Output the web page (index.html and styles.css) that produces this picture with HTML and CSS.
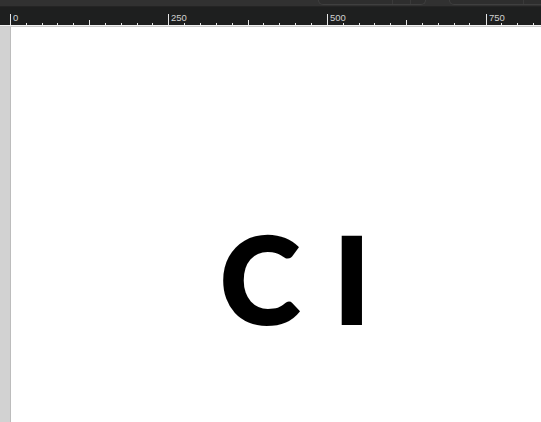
FILE: index.html
```html
<!DOCTYPE html>
<html>
<head>
<meta charset="utf-8">
<link rel="stylesheet" href="styles.css">
</head>
<body>
<div class="app">
  <div class="topbar">
    <div class="tab tab-a"><span class="seg seg-a1"></span><span class="seg seg-a2"></span><span class="seg seg-a3"></span></div>
    <div class="tab tab-b"><span class="seg seg-b1"></span><span class="seg seg-b2"></span></div>
  </div>
  <div class="hruler">
    <svg class="ruler-svg" width="541" height="18" viewBox="0 0 541 18">
      <path class="ticks" d="M10.5 7V18M26.5 16V18M42.5 16V18M57.5 16V18M73.5 16V18M89.5 13V18M105.5 16V18M121.5 16V18M137.5 16V18M152.5 16V18M168.5 7V18M184.5 16V18M200.5 16V18M216.5 16V18M232.5 16V18M248.5 13V18M263.5 16V18M279.5 16V18M295.5 16V18M311.5 16V18M327.5 7V18M343.5 16V18M359.5 16V18M374.5 16V18M390.5 16V18M406.5 13V18M422.5 16V18M438.5 16V18M454.5 16V18M469.5 16V18M486.5 7V18M501.5 16V18M517.5 16V18M533.5 16V18"/>
      <text class="rlabel" x="13" y="14">0</text>
      <text class="rlabel" x="171" y="14">250</text>
      <text class="rlabel" x="330" y="14">500</text>
      <text class="rlabel" x="489" y="14">750</text>
    </svg>
  </div>
  <div class="hline"></div>
  <div class="work">
    <div class="vruler"></div>
    <div class="canvas">
      <div class="logo">C I</div>
    </div>
  </div>
</div>
</body>
</html>
```

FILE: styles.css
```css
html, body {
  margin: 0;
  padding: 0;
  background: #ffffff;
  overflow: hidden;
}

.app {
  width: 541px;
  height: 422px;
  display: flex;
  flex-direction: column;
}

.topbar {
  height: 6px;
  background: #313131;
  border-bottom: 1px solid #242424;
  display: flex;
  align-items: flex-start;
  padding-left: 318px;
  gap: 23px;
  overflow: hidden;
}

.tab {
  height: 4px;
  border: 1px solid #3f3f3f;
  border-top: none;
  border-radius: 0 0 5px 5px;
  background: #2e2e2e;
  display: flex;
  flex-shrink: 0;
}

.tab-a { width: 106px; }
.tab-b { width: 120px; }

.seg {
  height: 100%;
  border-right: 1px solid #3a3a3a;
}
.seg-a1 { width: 73px; }
.seg-a2 { width: 17px; }
.seg-a3 { border-right: none; flex: 1; }
.seg-b1 { width: 73px; }
.seg-b2 { border-right: none; flex: 1; }

.hruler {
  height: 18px;
  background: #1e1f1f;
}

.ruler-svg {
  display: block;
}

.ticks {
  stroke: #e6e6e6;
  stroke-width: 1;
  fill: none;
}

.rlabel {
  font-family: "Liberation Sans", Arial, sans-serif;
  font-size: 9.5px;
  fill: #d0d0d0;
}

.hline {
  height: 1px;
  background: #f2f2f2;
  border-bottom: 1px solid #c9c9c9;
}

.work {
  flex: 1;
  display: flex;
}

.vruler {
  width: 10px;
  background: #d2d2d2;
  border-right: 1px solid #bcbcbc;
}

.canvas {
  flex: 1;
  background: #ffffff;
  padding-top: 190px;
  padding-left: 209px;
}

.logo {
  font-family: "Lato", "Inter", sans-serif;
  font-weight: 900;
  font-size: 121px;
  line-height: 1;
  letter-spacing: 2.5px;
  color: #000000;
  -webkit-text-stroke: 2px #000000;
  white-space: pre;
}
```
